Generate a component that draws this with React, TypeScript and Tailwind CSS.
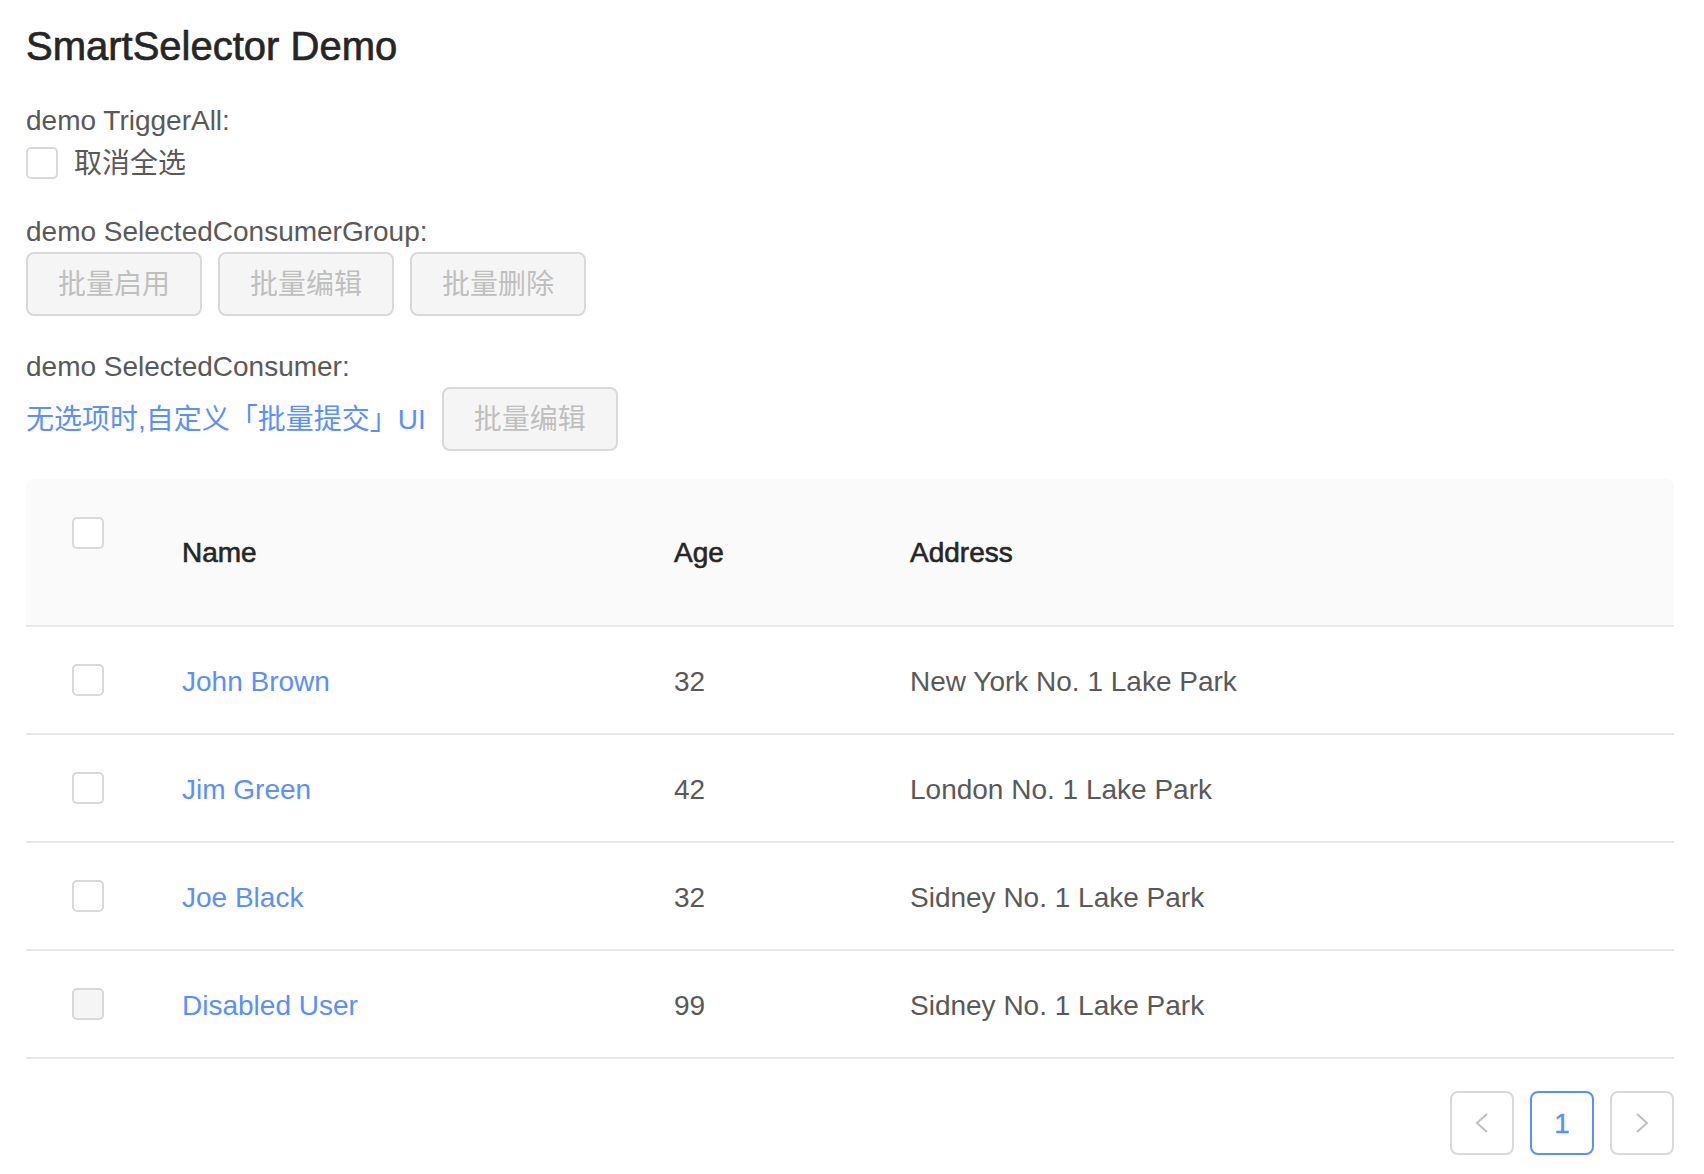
import React from "react";

const rows = [
  { name: "John Brown", age: 32, address: "New York No. 1 Lake Park" },
  { name: "Jim Green", age: 42, address: "London No. 1 Lake Park" },
  { name: "Joe Black", age: 32, address: "Sidney No. 1 Lake Park" },
  { name: "Disabled User", age: 99, address: "Sidney No. 1 Lake Park", disabled: true },
];

function Checkbox({ disabled = false }: { disabled?: boolean }) {
  return (
    <span
      className={`box-border block h-[32px] w-[32px] shrink-0 rounded-[5px] border-2 border-[#d9d9d9] ${
        disabled ? "bg-[#f5f5f5]" : "bg-white"
      }`}
    />
  );
}

function DisabledButton({ children }: { children: React.ReactNode }) {
  return (
    <button
      disabled
      className="box-border flex h-[64px] w-[176px] items-center justify-center rounded-[8px] border-2 border-[#d9d9d9] bg-[#f5f5f5] pt-[2px] text-[28px] leading-none text-[#bfbfbf]"
    >
      {children}
    </button>
  );
}

function Chevron({ dir }: { dir: "left" | "right" }) {
  return (
    <svg width="16" height="22" viewBox="0 0 16 22" fill="none">
      <polyline
        points={dir === "left" ? "13,2 3,11 13,20" : "3,2 13,11 3,20"}
        stroke="#bfbfbf"
        strokeWidth="2"
      />
    </svg>
  );
}

export default function App() {
  return (
    <div className="min-h-screen bg-white pt-[18px] pl-[26px] text-[28px] text-[#595959] [font-family:'Liberation_Sans','Noto_Sans_CJK_SC',sans-serif]">
      <div className="w-[1648px]">
        <h1 className="text-[40px] leading-[56px] font-normal text-[#262626] [-webkit-text-stroke:0.7px_#262626]">
          SmartSelector Demo
        </h1>

        <div className="mt-[23px] h-[44px] pt-[2px] leading-[44px]">demo TriggerAll:</div>
        <label className="flex h-[44px] items-center gap-4">
          <Checkbox />
          <span className="pt-[2px] leading-none">取消全选</span>
        </label>

        <div className="mt-[25px] h-[42px] leading-[44px]">demo SelectedConsumerGroup:</div>
        <div className="flex gap-4">
          <DisabledButton>批量启用</DisabledButton>
          <DisabledButton>批量编辑</DisabledButton>
          <DisabledButton>批量删除</DisabledButton>
        </div>

        <div className="mt-[29px] h-[42px] leading-[44px]">demo SelectedConsumer:</div>
        <div className="flex items-center gap-4">
          <span className="pt-[2px] leading-none text-[#5b8ff9]">无选项时,自定义「批量提交」UI</span>
          <DisabledButton>批量编辑</DisabledButton>
        </div>

        <div className="mt-[28px]">
          <div className="grid h-[148px] grid-cols-[124px_492px_236px_1fr] rounded-t-[8px] border-b-2 border-[#e8e8e8] bg-[#fafafa] text-[#262626] [-webkit-text-stroke:0.6px_#262626]">
            <div className="flex justify-center pt-[38px]">
              <Checkbox />
            </div>
            <div className="flex items-center pl-8 pt-[2px]">Name</div>
            <div className="flex items-center pl-8 pt-[2px]">Age</div>
            <div className="flex items-center pl-8 pt-[2px]">Address</div>
          </div>
          {rows.map((r) => (
            <div
              key={r.name}
              className="grid h-[108px] grid-cols-[124px_492px_236px_1fr] border-b-2 border-[#e8e8e8]"
            >
              <div className="flex items-center justify-center">
                <Checkbox disabled={r.disabled} />
              </div>
              <div className="flex items-center pl-8 pt-[4px] text-[#5b8ff9]">{r.name}</div>
              <div className="flex items-center pl-8 pt-[4px]">{r.age}</div>
              <div className="flex items-center pl-8 pt-[4px]">{r.address}</div>
            </div>
          ))}
        </div>

        <div className="mt-[32px] flex justify-end gap-4">
          <div className="box-border flex h-[64px] w-[64px] items-center justify-center rounded-[8px] border-2 border-[#d9d9d9]">
            <Chevron dir="left" />
          </div>
          <div className="box-border flex h-[64px] w-[64px] items-center justify-center rounded-[8px] border-2 border-[#5b8ff9] pt-[2px] text-[#5b8ff9] [-webkit-text-stroke:0.4px_#5b8ff9]">
            1
          </div>
          <div className="box-border flex h-[64px] w-[64px] items-center justify-center rounded-[8px] border-2 border-[#d9d9d9]">
            <Chevron dir="right" />
          </div>
        </div>
      </div>
    </div>
  );
}
